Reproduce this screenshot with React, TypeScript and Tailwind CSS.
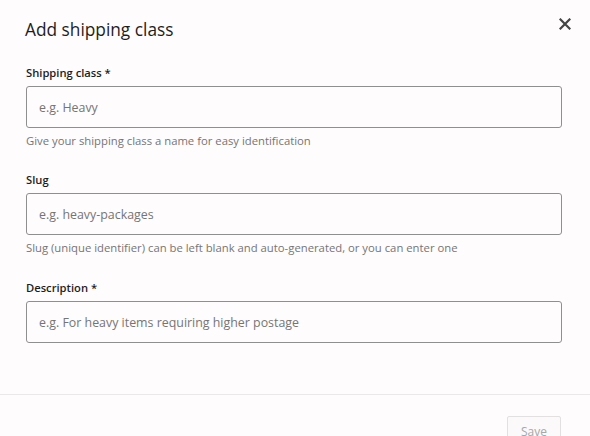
import React from 'react';

const font = { fontFamily: '"Open Sans", "Noto Sans", sans-serif' };

function Field({ label, placeholder, help, className = '' }: { label: string; placeholder: string; help?: string; className?: string }) {
  return (
    <div className={className}>
      <label className="block text-[11.2px] font-semibold text-[#1e1e1e] leading-[16px]">{label}</label>
      <input
        className="mt-[5px] block w-full h-[42px] rounded-[3px] border border-[#8f8f8f] bg-transparent px-[12px] text-[12.4px] text-[#1e1e1e] placeholder:text-[#757575] outline-none"
        placeholder={placeholder}
      />
      {help && <p className="mt-[6px] text-[11.3px] leading-[14px] text-[#757575]">{help}</p>}
    </div>
  );
}

export default function App() {
  return (
    <div className="w-[590px] h-[436px] overflow-hidden bg-[#fffcfd] flex flex-col" style={font}>
      <div className="flex items-start justify-between pl-[25px] pr-[19px] pt-[18px]">
        <h1 className="text-[17.3px] leading-[24px] text-[#1e1e1e]">Add shipping class</h1>
        <button className="text-[#444]" aria-label="Close">
          <svg width="12" height="12" viewBox="0 0 12 12">
            <path d="M1.5 1.5 L10.5 10.5 M10.5 1.5 L1.5 10.5" stroke="currentColor" strokeWidth="2.2" strokeLinecap="square" />
          </svg>
        </button>
      </div>
      <div className="px-[26px] pr-[28px] pt-[23px]">
        <Field label="Shipping class *" placeholder="e.g. Heavy" help="Give your shipping class a name for easy identification" />
        <Field className="mt-[24px]" label="Slug" placeholder="e.g. heavy-packages" help="Slug (unique identifier) can be left blank and auto-generated, or you can enter one" />
        <Field className="mt-[25px]" label="Description *" placeholder="e.g. For heavy items requiring higher postage" />
      </div>
      <div className="mt-[51px] border-t border-[#ece8e9]" />
      <div className="flex justify-end pr-[29px] pt-[21px]">
        <button className="h-[32px] px-[13px] rounded-[2px] border border-[#e3e0e1] bg-[#fbf9fa] text-[12px] text-[#a7a7a7]">Save</button>
      </div>
    </div>
  );
}
